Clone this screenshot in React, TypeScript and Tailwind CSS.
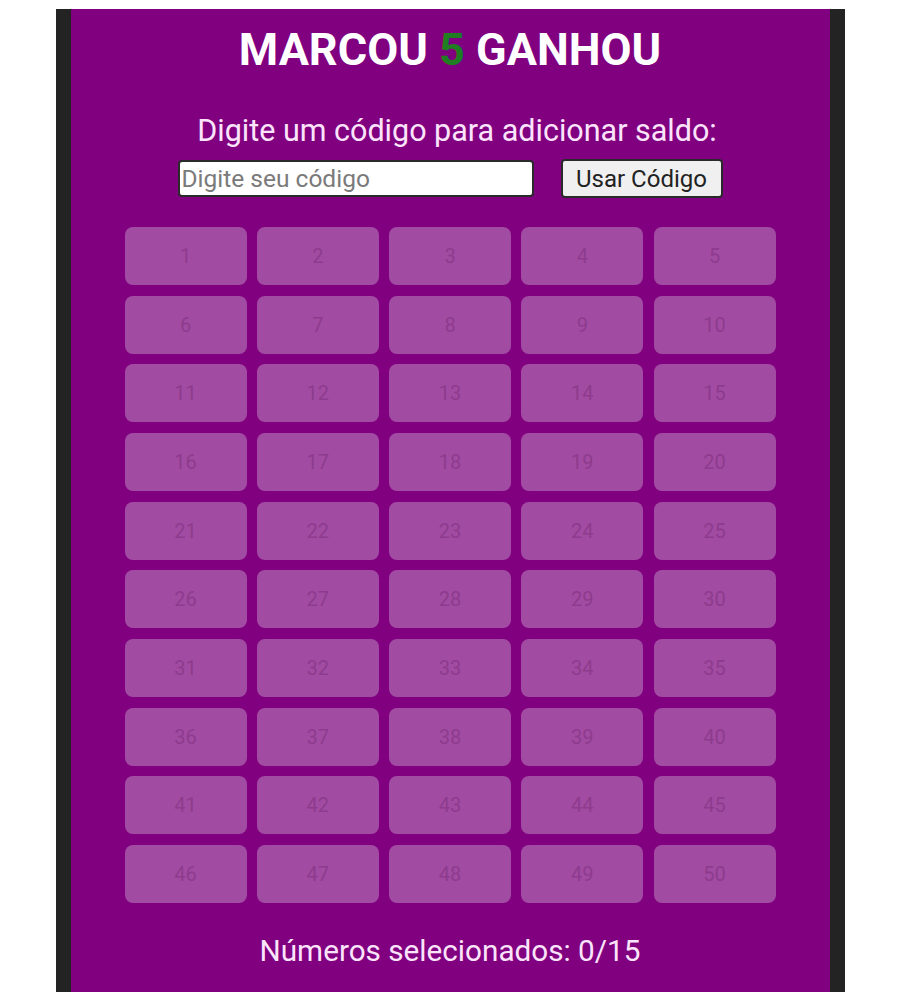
const numbers = Array.from({ length: 50 }, (_, i) => i + 1);

export default function App() {
    return (
        <div className="min-h-screen bg-white pt-[9px]" style={{ fontFamily: "Roboto, 'Liberation Sans', sans-serif" }}>
            <div className="mx-auto flex h-[983px] w-[789px] flex-col items-center border-x-[15px] border-[#222322] bg-[#800080] pt-[15px]">
                {/* Title */}
                <h1 className="text-[45px] font-bold leading-[52px] text-white">
                    MARCOU <span className="text-[#1f7d22]">5</span> GANHOU
                </h1>

                {/* Code input */}
                <p className="mt-[39px] pl-[14px] text-[30.5px] leading-[32px] text-[#fbe4fb]">
                    Digite um código para adicionar saldo:
                </p>
                <div className="mt-[12px] flex items-center gap-[27px]">
                    <input
                        type="text"
                        placeholder="Digite seu código"
                        className="h-[37px] w-[356px] rounded-[4px] border-2 border-[#2a2a2a] bg-white px-[2px] text-[24.5px] text-[#333] placeholder:text-[#7a7a7a] outline-none"
                    />
                    <button className="h-[39px] w-[162px] rounded-[4px] border-2 border-[#2a2a2a] bg-[#f0f0f0] text-[24px] text-[#222]">
                        Usar Código
                    </button>
                </div>

                {/* Number grid */}
                <div className="mt-[29px] grid w-[651px] grid-cols-5 gap-x-[10.25px] gap-y-[10.67px]">
                    {numbers.map((n) => (
                        <button
                            key={n}
                            disabled
                            className="flex h-[58px] items-center justify-center rounded-[8px] bg-[#a24ba2] text-[20px] text-[#8d3c8d]"
                        >
                            {n}
                        </button>
                    ))}
                </div>

                <p className="mt-[32px] text-[29.7px] leading-[32px] text-[#fbe4fb]">
                    Números selecionados: 0/15
                </p>
            </div>
        </div>
    );
}
